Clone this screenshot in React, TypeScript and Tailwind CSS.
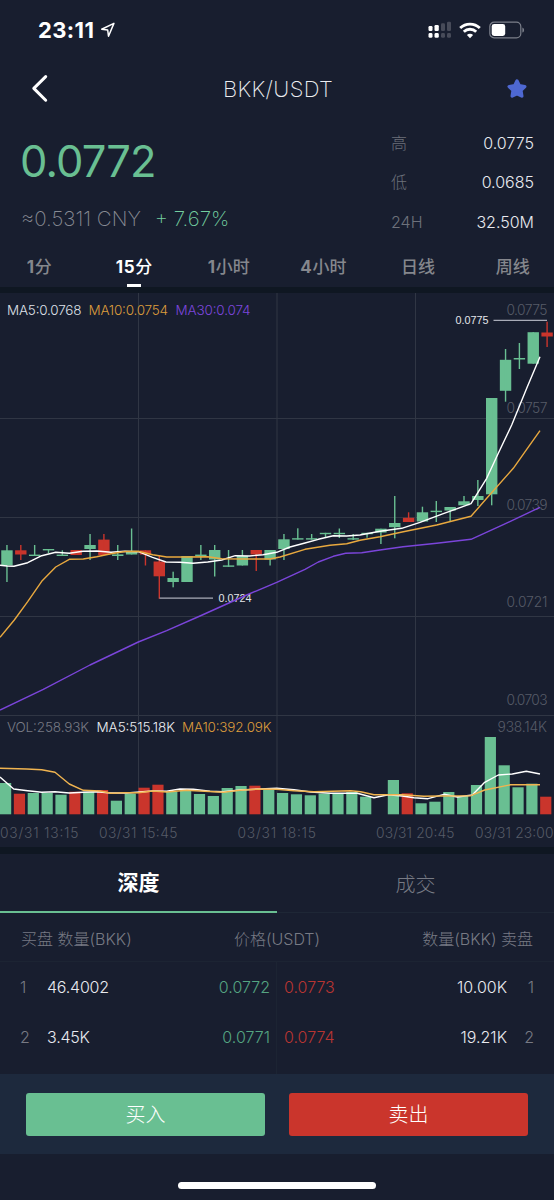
import React from 'react';
import clsx from 'clsx';

const GREEN = '#69bf92';
const RED = '#ca352c';

const STEP = 13.85;

const intervals = ['1分', '15分', '1小时', '4小时', '日线', '周线'];

const stats = [
  { label: '高', value: '0.0775' },
  { label: '低', value: '0.0685' },
  { label: '24H', value: '32.50M' },
];

const orders = [
  { level: 1, bidAmount: '46.4002', bid: '0.0772', ask: '0.0773', askAmount: '10.00K' },
  { level: 2, bidAmount: '3.45K', bid: '0.0771', ask: '0.0774', askAmount: '19.21K' },
];

// [body top, body bottom, wick top, wick bottom, falling]
const candles: [number, number, number, number, number][] = [
  [550.3, 565.5, 545, 582, 0],
  [550.3, 554.5, 545, 560, 1],
  [554.6, 556, 545, 556, 0],
  [549, 550.4, 549, 553, 0],
  [554.6, 556, 550.3, 556, 0],
  [550, 555, 550, 555, 1],
  [545, 549, 534, 560, 0],
  [539.6, 555, 534, 555, 1],
  [554.4, 556, 545, 560, 0],
  [551.5, 554.5, 528.5, 554.5, 0],
  [550.3, 554.5, 550.3, 565.5, 1],
  [561.5, 576.3, 556, 598.7, 1],
  [578, 582, 571.7, 587.3, 0],
  [556, 582, 556, 582, 0],
  [554.6, 556, 545, 560, 0],
  [550, 559.5, 545, 576.5, 0],
  [565.4, 566.8, 550, 566.8, 0],
  [556, 565.5, 550, 565.5, 0],
  [550, 554.5, 550, 571, 1],
  [550, 559.5, 550, 565.5, 0],
  [539.3, 549, 534, 560, 0],
  [538.2, 539.6, 528.3, 539.6, 0],
  [538.2, 539.6, 534, 539.6, 0],
  [532.8, 534.2, 532.8, 537.7, 0],
  [532.8, 534.2, 528.5, 538, 0],
  [538.2, 539.6, 534, 540, 0],
  [532.8, 534.2, 532.8, 537.7, 0],
  [528.7, 532.5, 528.7, 544, 0],
  [523, 527.2, 496, 538.3, 0],
  [517.8, 522, 512.3, 522, 1],
  [512.3, 521.5, 506.7, 521.5, 0],
  [510.7, 512.1, 501, 522, 0],
  [507, 510.5, 507, 521.3, 0],
  [501.3, 505.3, 496, 505.3, 0],
  [496, 500, 480, 506, 0],
  [398, 494.3, 398, 505.3, 0],
  [359.8, 390.8, 349, 401.7, 0],
  [358, 359.5, 343, 369, 0],
  [332.2, 363.7, 332.2, 363.7, 0],
  [332.5, 336.5, 321.7, 347, 1],
];

// [bar top, falling]
const volumes: [number, number][] = [
  [783, 0], [793.7, 1], [793, 0], [793, 0], [794.7, 0], [791.7, 1], [791.7, 0], [790, 1],
  [800.7, 0], [793.7, 0], [787.7, 1], [784.7, 1], [791.7, 0], [791, 0], [794, 0], [796, 0],
  [788, 0], [786, 0], [785.7, 1], [790, 0], [793, 0], [794.3, 0], [795.3, 0], [793.7, 0],
  [794, 0], [792, 0], [796.7, 0], [814.3, 0], [780, 0], [793.3, 1], [803.3, 0], [801.7, 0],
  [792, 0], [796, 0], [785, 0], [737, 0], [765.3, 0], [787.3, 0], [783.7, 0], [796.7, 1],
];

const ma5 =
  '0,565.3 7,566 14,566.3 27.7,562.7 41.7,555.7 55.7,552.3 69.3,553.3 83,551.3 97,551 111,552.3 125,551.3 138.5,551.7 152.5,557.3 166,562 180,562.3 193,563.2 207.7,562 221.7,560 235.3,555.7 249.3,556 263,554.7 276.7,552.3 290,547 305,543 318.3,539.3 333.3,535.7 346.7,536 360,535 380,531.2 401.7,528.3 420,522.3 443.3,513.7 471,503.7 486.7,478.3 498.3,453.3 511.7,425 526.7,388.3 540,356.7';
const ma10 =
  '0,637.3 14.3,620 27.7,601.7 41.7,581.3 55.7,567 69.3,559.3 83.3,559 96.7,556.7 111,553.7 125,551.5 138.3,551.3 152.7,554.7 166.7,557 181.7,557 207.7,556.8 221.7,558.7 246.7,559 270,559 280,557 305,549.3 330,545.3 346.7,543.7 360,540.3 380,536.7 403.3,531.7 436.7,525 471,516.3 486.7,498.3 513.3,468.3 526.7,449.3 540,430.7';
const ma30 =
  '0,710 43.3,689.3 90,665 138.3,642 166.7,630.7 200,616 246.7,595 276.7,582.3 305,569.3 318.3,562 333.3,556.3 345.7,553.3 361.7,552.7 380,550 403,546.7 436.7,543.3 471,539.3 503.3,524.7 540,507.3';
const volMa5 =
  '0,777 13.7,789 27.7,790.7 41.7,792.3 55,791.7 69.3,793 83.3,792.3 97,791.7 111,793 126.7,793 152.7,791 166.7,791.3 180,789 193.3,789.3 210,791.3 223.3,791.7 240,790 260,789 276.7,788.3 294,789.7 310.7,792 330.7,793.3 357.3,793.3 374,797.7 388.3,794.7 402.3,796 414,797.7 428,798.7 444,794.3 457.3,797 472.3,795 484.7,782.3 498.3,775 512.3,774 526.3,771.3 540,774';
const volMa10 =
  '0,768.3 26.7,769 41.7,769.7 55,772.3 69.3,784 83.3,790.3 100,791 111,793.3 125,792.7 138.3,792.7 152.7,791 166.7,792 186.7,790.3 200,791 223.3,792.3 240,790.3 260,789 276.7,789.3 294,790.7 314,791.7 350.7,790.7 360.7,791.7 374,794.7 402.3,794.7 424,796.3 440.7,796 470.7,795.7 484.7,790 510.7,784.7 540,784.7';

const priceAxis = [
  { y: 315, text: '0.0775' },
  { y: 412.5, text: '0.0757' },
  { y: 509.5, text: '0.0739' },
  { y: 607, text: '0.0721' },
  { y: 704.5, text: '0.0703' },
];

const timeAxis = [
  { x: 0, text: '03/31 13:15' },
  { x: 99, text: '03/31 15:45' },
  { x: 237.5, text: '03/31 18:15' },
  { x: 376, text: '03/31 20:45' },
  { x: 475, text: '03/31 23:00' },
];

function StatusBar() {
  return (
    <div className="flex h-[60px] items-center pl-[38px] pr-[28px]">
      <span className="w-[58px] text-[22px] font-bold leading-none tracking-[0.4px]">23:11</span>
      <svg className="ml-[4px]" width="16" height="16" viewBox="0 0 15 16" fill="none">
        <path d="M1.2 7.2 13.4 1.4 8 14.2 7.2 8Z" stroke="#fff" strokeWidth="1.5" strokeLinejoin="round" />
      </svg>
      <div className="ml-auto flex items-center">
        <svg width="24" height="18" viewBox="0 0 24 18" fill="#fff">
          <rect x="0.5" y="5" width="4" height="5" rx="1.2" />
          <rect x="6.5" y="4" width="4.3" height="6" rx="1.2" />
          <rect x="13" y="2.3" width="4" height="7.7" rx="1.2" fill="#474b59" />
          <rect x="19" y="0.8" width="4" height="9.2" rx="1.2" fill="#474b59" />
          <rect x="0.5" y="12" width="4" height="4.8" rx="1.4" />
          <rect x="6.5" y="12" width="4.3" height="4.8" rx="1.4" />
          <rect x="13" y="12" width="4" height="4.8" rx="1.4" fill="#474b59" />
          <rect x="19" y="12" width="4" height="4.8" rx="1.4" fill="#474b59" />
        </svg>
        <svg className="ml-[7px]" width="22" height="17" viewBox="0 0 22 17" fill="none" stroke="#fff" strokeWidth="2.8">
          <path d="M1.2 6.1a14 14 0 0 1 19.6 0" />
          <path d="M4.8 9.8a8.8 8.8 0 0 1 12.4 0" />
          <path d="M7.9 13a4.4 4.4 0 0 1 6.2 0L11 16.2Z" fill="#fff" stroke="none" />
        </svg>
        <svg className="ml-[8px] mr-px" width="36" height="18" viewBox="0 0 36 18" fill="none">
          <rect x="0.8" y="1.2" width="31" height="15.6" rx="4.4" stroke="#7b7f8a" strokeWidth="1.2" />
          <rect x="2.7" y="3" width="13.5" height="12" rx="2.4" fill="#fff" />
          <path d="M33.4 6.4c2.2.8 2.2 4.4 0 5.2Z" fill="#7b7f8a" />
        </svg>
      </div>
    </div>
  );
}

function TitleBar() {
  return (
    <div className="flex h-[58px] items-center justify-between pl-[30px] pr-[26px]">
      <svg className="-mt-[3px]" width="20" height="30" viewBox="0 0 20 30" fill="none">
        <path d="M15.7 3.6 3.8 15.4 15.7 27.2" stroke="#fff" strokeWidth="3" strokeLinecap="round" strokeLinejoin="round" />
      </svg>
      <h1 className="text-[22px] font-extralight leading-none tracking-[0.35px] text-[#eceef2]">BKK/USDT</h1>
      <svg className="-mt-px" width="22" height="22" viewBox="0 0 22 22">
        <path
          d="M11 3 13.3 7.8 18.8 8.6 14.9 12.4 15.8 18 11 15.8 6.2 18 7.1 12.4 3.2 8.6 8.7 7.8Z"
          fill="#4e68d2"
          stroke="#4e68d2"
          strokeWidth="3.4"
          strokeLinejoin="round"
        />
      </svg>
    </div>
  );
}

function Summary() {
  return (
    <div className="flex h-[129px] justify-between pl-[20px] pr-[20px]">
      <div>
        <p className="mt-[17px] text-[43.5px] font-normal leading-[52px] tracking-[-0.9px] text-[#69bf92]">0.0772</p>
        <p className="ml-px mt-[20px] flex text-[20.5px] font-extralight leading-[24px]">
          <span className="text-[#888b94]">≈0.5311 CNY</span>
          <span className="ml-[14px] text-[#74cfa0]">+ 7.67%</span>
        </p>
      </div>
      <div className="mt-[5px] w-[143px]">
        {stats.map((stat) => (
          <div key={stat.label} className="flex h-[39.5px] items-center justify-between text-[16px] font-light">
            <span className="text-[#6d717b]">{stat.label}</span>
            <span className="text-[#e8eaef]">{stat.value}</span>
          </div>
        ))}
      </div>
    </div>
  );
}

function IntervalTabs() {
  return (
    <div className="-ml-[8px] grid h-[40px] w-[568px] grid-cols-6">
      {intervals.map((label, i) => (
        <div
          key={label}
          className={clsx(
            'flex flex-col items-center justify-between pt-[9px] text-[17px] font-medium leading-[22px]',
            i === 1 ? 'text-white' : 'text-[#85878d]'
          )}
        >
          <span>
            <span className="font-bold tracking-[0.7px]">{label.replace(/\D/g, '')}</span>
            {label.replace(/\d/g, '')}
          </span>
          {i === 1 && <span className="h-[3px] w-[14px] bg-white" />}
        </div>
      ))}
    </div>
  );
}

function Chart() {
  return (
    <svg className="block" width="554" height="554" viewBox="0 293 554 554">
      <g stroke="#303644" strokeWidth="1">
        {[418.5, 517.5, 616.5, 715.5].map((y) => (
          <line key={y} x1="0" x2="554" y1={y} y2={y} />
        ))}
        {[138.5, 277, 415.5].map((x) => (
          <line key={x} x1={x} x2={x} y1="293" y2="814" />
        ))}
      </g>

      {candles.map(([top, bottom, high, low, falling], i) => {
        const x = 6.95 + i * STEP;
        return (
          <g key={i} fill={falling ? RED : GREEN}>
            <rect x={x - 5.7} y={top} width="11.4" height={bottom - top} />
            <rect x={x - 0.7} y={high} width="1.4" height={low - high} />
          </g>
        );
      })}

      {volumes.map(([top, falling], i) => (
        <rect key={i} x={i * STEP} y={top} width="11.2" height={814.3 - top} fill={falling ? RED : GREEN} />
      ))}

      {/* High and low markers */}
      <g fill="#e4e6ea" fontSize="10.8" fontFamily="Liberation Sans, sans-serif">
        <text x="455.5" y="323.8" textLength="33">0.0775</text>
        <text x="218.5" y="601.8" textLength="33">0.0724</text>
      </g>
      <g stroke="#a9acb8" strokeWidth="1.3">
        <line x1="493.5" x2="547" y1="320.3" y2="320.3" />
        <line x1="159.5" x2="213" y1="598.2" y2="598.2" />
      </g>

      <g fontSize="13.8" fontWeight="300" fill="#565b67">
        {priceAxis.map((tick) => (
          <text key={tick.text} x="506.5" y={tick.y} textLength="41">{tick.text}</text>
        ))}
        <text x="497.5" y="731.5" textLength="49.5">938.14K</text>
        {timeAxis.map((tick) => (
          <text key={tick.text} x={tick.x} y="837.5" textLength="78.5">{tick.text}</text>
        ))}
      </g>

      <g fill="none" strokeWidth="1.4" strokeLinejoin="round">
        <polyline points={ma30} stroke="#7b45da" />
        <polyline points={ma5} stroke="#fff" />
        <polyline points={ma10} stroke="#e9a93f" />
        <polyline points={volMa5} stroke="#fff" />
        <polyline points={volMa10} stroke="#f0b450" />
      </g>

      <g fontSize="13.5" fontWeight="300">
        <text x="7" y="314.5" textLength="74.5" fill="#dfe1e8">MA5:0.0768</text>
        <text x="88.5" y="314.5" textLength="79.5" fill="#dc9c3c">MA10:0.0754</text>
        <text x="175.5" y="314.5" textLength="75" fill="#7c46dc">MA30:0.074</text>
        <text x="7" y="731.5" textLength="82" fill="#777a84">VOL:258.93K</text>
        <text x="96.5" y="731.5" textLength="78.5" fill="#eceef2">MA5:515.18K</text>
        <text x="182" y="731.5" textLength="89.5" fill="#dc9c3c">MA10:392.09K</text>
      </g>
    </svg>
  );
}

function OrderBook() {
  return (
    <div>
      <div className="flex h-[59px] border-b border-[#1e2736]">
        <div className="-mb-px flex w-[277px] items-center justify-center border-b-2 border-[#69bf92] text-[21px] font-bold">
          深度
        </div>
        <div className="flex w-[277px] items-center justify-center pt-[3px] text-[20px] font-light text-[#777a84]">
          成交
        </div>
      </div>
      <div className="flex h-[49px] items-center justify-between border-b border-[#1c2433] px-[21px] pt-[3px] text-[16px] font-light text-[#777a84]">
        <span className="w-[170px]">买盘 数量(BKK)</span>
        <span>价格(USDT)</span>
        <span className="w-[170px] text-right">数量(BKK) 卖盘</span>
      </div>
      <div className="flex h-[112px] text-[16px] font-light">
        <div className="w-[277px] border-r border-[#1c2433] pl-[20px] pr-[6px]">
          {orders.map((order) => (
            <div key={order.level} className="flex h-[50px] items-center">
              <span className="w-[27px] text-[#777a84]">{order.level}</span>
              <span className="tracking-[-0.2px] text-[#e8eaef]">{order.bidAmount}</span>
              <span className="ml-auto text-[#55a582]">{order.bid}</span>
            </div>
          ))}
        </div>
        <div className="w-[277px] pl-[7px] pr-[20px]">
          {orders.map((order) => (
            <div key={order.level} className="flex h-[50px] items-center">
              <span className="text-[#b83532]">{order.ask}</span>
              <span className="ml-auto text-[#e8eaef]">{order.askAmount}</span>
              <span className="w-[27px] text-right text-[#777a84]">{order.level}</span>
            </div>
          ))}
        </div>
      </div>
    </div>
  );
}

function TradeActions() {
  return (
    <div className="flex h-[80px] items-center justify-between bg-[#1d293d] px-[26px] text-[20px] font-light">
      <button className="h-[43px] w-[239px] rounded-[3px] bg-[#69bf92] pt-[2px] text-white">买入</button>
      <button className="h-[43px] w-[239px] rounded-[3px] bg-[#ca352c] pt-[2px] text-white">卖出</button>
    </div>
  );
}

export default function App() {
  return (
    <div className="h-[1200px] w-[554px] overflow-hidden bg-[#181e2f] font-['Inter','Noto_Sans_CJK_SC',sans-serif] text-white">
      <StatusBar />
      <TitleBar />
      <Summary />
      <IntervalTabs />
      <div className="h-[6px] bg-[#0f1722]" />
      <Chart />
      <div className="h-[7px] bg-[#0f1722]" />
      <OrderBook />
      <TradeActions />
      <div className="flex h-[46px] justify-center pt-[28px]">
        <div className="h-[7px] w-[198px] rounded-full bg-white" />
      </div>
    </div>
  );
}
